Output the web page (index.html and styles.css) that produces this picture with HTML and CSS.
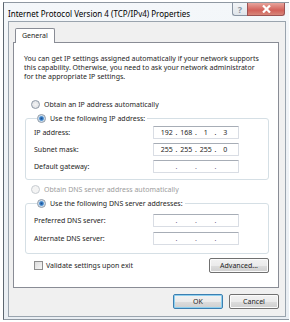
FILE: index.html
```html
<!DOCTYPE html>
<html lang="en">
<head>
    <meta charset="UTF-8">
    <meta name="viewport" content="width=device-width, initial-scale=1.0">
    <title>Internet Protocol Version 4 (TCP/IPv4) Properties</title>
    <link rel="stylesheet" href="styles.css">
</head>
<body>
    <div class="window">
        <div class="titlebar">
            <div class="title">Internet Protocol Version 4 (TCP/IPv4) Properties</div>
            <div class="caption-buttons">
                <div class="cap help">?</div>
                <div class="cap close">
                    <svg width="11" height="8" viewBox="0 0 11 8">
                        <path d="M2 0.5 L9 7.5 M9 0.5 L2 7.5" stroke="#fff" stroke-width="2.2"/>
                    </svg>
                </div>
            </div>
        </div>

        <div class="client">
            <div class="tabs">
                <div class="tab">General</div>
            </div>

            <div class="panel">
                <p class="intro">
                    You can get IP settings assigned automatically if your network supports<br>
                    this capability. Otherwise, you need to ask your network administrator<br>
                    for the appropriate IP settings.
                </p>

                <div class="option">
                    <span class="radio"></span>Obtain an IP address automatically
                </div>

                <fieldset class="group">
                    <legend class="option"><span class="radio checked"></span>Use the following IP address:</legend>
                    <div class="row">
                        <span>IP address:</span>
                        <div class="ipbox">
                            <span class="oct">192</span><span class="dot">.</span>
                            <span class="oct">168</span><span class="dot">.</span>
                            <span class="oct">1</span><span class="dot">.</span>
                            <span class="oct">3</span>
                        </div>
                    </div>
                    <div class="row">
                        <span>Subnet mask:</span>
                        <div class="ipbox">
                            <span class="oct">255</span><span class="dot">.</span>
                            <span class="oct">255</span><span class="dot">.</span>
                            <span class="oct">255</span><span class="dot">.</span>
                            <span class="oct">0</span>
                        </div>
                    </div>
                    <div class="row">
                        <span>Default gateway:</span>
                        <div class="ipbox empty">
                            <span class="oct"></span><span class="dot">.</span>
                            <span class="oct"></span><span class="dot">.</span>
                            <span class="oct"></span><span class="dot">.</span>
                            <span class="oct"></span>
                        </div>
                    </div>
                </fieldset>

                <div class="option disabled">
                    <span class="radio"></span>Obtain DNS server address automatically
                </div>

                <fieldset class="group dns">
                    <legend class="option"><span class="radio checked"></span>Use the following DNS server addresses:</legend>
                    <div class="row">
                        <span>Preferred DNS server:</span>
                        <div class="ipbox empty">
                            <span class="oct"></span><span class="dot">.</span>
                            <span class="oct"></span><span class="dot">.</span>
                            <span class="oct"></span><span class="dot">.</span>
                            <span class="oct"></span>
                        </div>
                    </div>
                    <div class="row">
                        <span>Alternate DNS server:</span>
                        <div class="ipbox empty">
                            <span class="oct"></span><span class="dot">.</span>
                            <span class="oct"></span><span class="dot">.</span>
                            <span class="oct"></span><span class="dot">.</span>
                            <span class="oct"></span>
                        </div>
                    </div>
                </fieldset>

                <div class="bottom-row">
                    <div class="option check-option">
                        <span class="checkbox"></span>Validate settings upon exit
                    </div>
                    <button class="btn advanced">Advanced...</button>
                </div>
            </div>

            <div class="dialog-buttons">
                <button class="btn default">OK</button>
                <button class="btn">Cancel</button>
            </div>
        </div>
    </div>
</body>
</html>
```

FILE: styles.css
```css
body {
    margin: 0;
    padding: 0;
    background-color: white;
    font-family: "Noto Sans", "Open Sans", sans-serif;
    font-size: 7px;
    letter-spacing: 0;
    color: #1e1e1e;
}

.window {
    margin: 2px 0 0 3px;
    width: 286px;
    height: 318px;
    border-left: 1px solid #5c6670;
    border-top: 1px solid #8f98a2;
    border-bottom: 1px solid #8f98a2;
    background: linear-gradient(#f4f7fa, #e9eef3);
    box-sizing: border-box;
}

.titlebar {
    display: flex;
    justify-content: space-between;
    align-items: flex-start;
    height: 18px;
    padding-left: 4px;
}

.title {
    font-size: 8px;
    color: #000;
    padding-top: 5px;
}

.caption-buttons {
    display: flex;
    margin-right: 4px;
}

.cap {
    height: 13px;
    display: flex;
    align-items: center;
    justify-content: center;
    border: 1px solid #8a95a3;
    border-top: none;
    box-sizing: border-box;
}

.help {
    width: 15px;
    background: linear-gradient(#f3f5f7, #dfe4ea);
    color: #8a96a4;
    font-size: 9px;
    font-weight: bold;
    border-radius: 0 0 0 3px;
    border-right: none;
}

.close {
    width: 38px;
    background: linear-gradient(#e8a49c, #d2615a 60%, #d7867a);
    border-color: #9c5353;
    border-radius: 0 0 3px 0;
}

.client {
    margin: 0 3px 0 4px;
    height: 296px;
    border: 1px solid #9aa4ae;
    background-color: #f0f0f0;
    padding: 6px 6px 0 4px;
    box-sizing: border-box;
}

.tabs {
    display: flex;
    margin-left: 2px;
}

.tab {
    background-color: white;
    border: 1px solid #898c95;
    border-bottom: none;
    border-radius: 2px 2px 0 0;
    padding: 2px 6px 3px 6px;
    margin-bottom: -1px;
    position: relative;
    z-index: 1;
}

.panel {
    background-color: white;
    border: 1px solid #898c95;
    height: 246px;
    padding: 0 9px 0 10px;
    box-sizing: border-box;
}

.intro {
    margin: 11px 0 0 0;
    line-height: 9px;
    white-space: nowrap;
}

.option {
    display: flex;
    align-items: center;
    height: 12px;
}

.panel > .option {
    margin: 17px 0 0 7px;
}

.panel > .option.disabled {
    margin-top: 3px;
    color: #9d9d9d;
}

.radio {
    width: 7px;
    height: 7px;
    border-radius: 50%;
    border: 1px solid #8e99a6;
    background: radial-gradient(#f4f4f4, #d8dbe0);
    margin-right: 4px;
    box-sizing: content-box;
    display: inline-block;
}

.radio.checked {
    background: radial-gradient(circle, #1c4e8f 0, #3c86cf 1.8px, #c6d9ea 2.8px, #e9eff5 4px);
}

.disabled .radio {
    border-color: #c7ccd1;
    background: #f4f4f4;
}

.group {
    margin: 2px 0 0 1px;
    border: 1px solid #d5dfe5;
    border-radius: 3px;
    padding: 0 29px 4px 8px;
}

.group.dns {
    padding: 2px 29px 6px 8px;
}

.group legend {
    padding: 0 2px 0 0;
    margin-left: 3px;
}

.row {
    display: flex;
    justify-content: space-between;
    align-items: center;
    height: 17px;
}

.dns .row {
    height: 18px;
}

.ipbox {
    width: 86px;
    height: 13px;
    border: 1px solid #d9dde4;
    border-top-color: #a7adb6;
    border-radius: 1px;
    display: flex;
    align-items: center;
    justify-content: space-between;
    padding: 0 6px 0 6px;
    box-sizing: border-box;
    background-color: white;
}

.oct {
    width: 14px;
    text-align: center;
}

.dot {
    width: 6px;
    text-align: center;
}

.ipbox.empty .dot {
    color: #6f5f8a;
}

.bottom-row {
    display: flex;
    justify-content: space-between;
    align-items: center;
    margin-top: 4px;
}

.check-option {
    margin-left: 10px;
}

.checkbox {
    width: 7px;
    height: 7px;
    border: 1px solid #8f8f8f;
    background: linear-gradient(135deg, #dcdcdc, #f7f7f7);
    margin-right: 3px;
}

.btn {
    font-family: "Noto Sans", "Open Sans", sans-serif;
    font-size: 7px;
    color: #1e1e1e;
    height: 15px;
    border: 1px solid #707070;
    border-radius: 2px;
    background: linear-gradient(#f2f2f2 0%, #ebebeb 50%, #dddddd 51%, #cfcfcf 100%);
    padding: 0;
    box-shadow: inset 0 0 0 1px #fbfbfb;
}

.advanced {
    width: 60px;
}

.dialog-buttons {
    display: flex;
    justify-content: flex-end;
    gap: 6px;
    margin-top: 6px;
}

.dialog-buttons .btn {
    width: 50px;
}

.btn.default {
    border-color: #3c7fb1;
    box-shadow: inset 0 0 0 1px #8fd0ef;
}
```
